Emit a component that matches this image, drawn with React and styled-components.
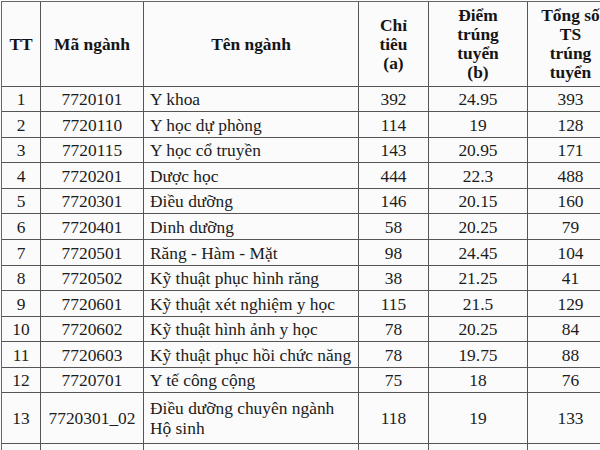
import React from 'react';
import styled, { createGlobalStyle } from 'styled-components';

const serif = '"Liberation Serif", "Times New Roman", serif';

const GlobalStyle = createGlobalStyle`
  html, body {
    margin: 0;
    padding: 0;
    background: #fbfbfb;
    overflow: hidden;
  }
  body {
    font-family: ${serif};
    color: #1c1c1c;
  }
  * { box-sizing: border-box; }
`;

const Page = styled.div`
  width: 600px;
  height: 450px;
  overflow: hidden;
  padding: 1px 0 0 1px;
`;

const Sheet = styled.div`
  width: 613px;
  display: flex;
  flex-direction: column;
  border-top: 1px solid #666;
  border-left: 1px solid #666;
  font-family: ${serif};
  font-size: 17.4px;
`;

const Row = styled.div`
  display: grid;
  grid-template-columns: 39px 103px 215px 70px 99px 86px;
  height: ${(p) => p.$h}px;
`;

const Cell = styled.div`
  display: flex;
  align-items: center;
  justify-content: ${(p) => (p.$left ? 'flex-start' : 'center')};
  padding: 0 ${(p) => (p.$left ? '6px' : '2px')};
  border-right: 1px solid #555;
  border-bottom: 1px solid #555;
  line-height: 20px;
  white-space: ${(p) => (p.$wrap ? 'normal' : 'nowrap')};
  overflow: hidden;
  text-align: ${(p) => (p.$left ? 'left' : 'center')};
`;

const HeadCell = styled(Cell)`
  font-weight: bold;
  line-height: 19px;
  color: #151515;
`;

const rows = [
  ['1', '7720101', 'Y khoa', '392', '24.95', '393', 25],
  ['2', '7720110', 'Y học dự phòng', '114', '19', '128', 26],
  ['3', '7720115', 'Y học cổ truyền', '143', '20.95', '171', 25],
  ['4', '7720201', 'Dược học', '444', '22.3', '488', 26],
  ['5', '7720301', 'Điều dưỡng', '146', '20.15', '160', 25],
  ['6', '7720401', 'Dinh dưỡng', '58', '20.25', '79', 26],
  ['7', '7720501', 'Răng - Hàm - Mặt', '98', '24.45', '104', 26],
  ['8', '7720502', 'Kỹ thuật phục hình răng', '38', '21.25', '41', 25],
  ['9', '7720601', 'Kỹ thuật xét nghiệm y học', '115', '21.5', '129', 26],
  ['10', '7720602', 'Kỹ thuật hình ảnh y học', '78', '20.25', '84', 25],
  ['11', '7720603', 'Kỹ thuật phục hồi chức năng', '78', '19.75', '88', 26],
  ['12', '7720701', 'Y tế công cộng', '75', '18', '76', 25],
  ['13', '7720301_02', 'Điều dưỡng chuyên ngành Hộ sinh', '118', '19', '133', 51],
  ['14', '7720301_03', 'Điều dưỡng chuyên ngành Gây mê hồi sức', '97', '19.5', '102', 51],
];

export default function App() {
  return (
    <Page>
      <GlobalStyle />
      <Sheet>
        <Row $h={85}>
          <HeadCell>TT</HeadCell>
          <HeadCell>Mã ngành</HeadCell>
          <HeadCell>Tên ngành</HeadCell>
          <HeadCell>Chỉ<br />tiêu<br />(a)</HeadCell>
          <HeadCell>Điểm<br />trúng<br />tuyển<br />(b)</HeadCell>
          <HeadCell>Tổng số<br />TS<br />trúng<br />tuyển</HeadCell>
        </Row>
        {rows.map(([tt, code, name, quota, score, total, h]) => (
          <Row key={tt} $h={h}>
            <Cell>{tt}</Cell>
            <Cell>{code}</Cell>
            <Cell $left $wrap={h > 30}>{name}</Cell>
            <Cell>{quota}</Cell>
            <Cell>{score}</Cell>
            <Cell>{total}</Cell>
          </Row>
        ))}
      </Sheet>
    </Page>
  );
}
